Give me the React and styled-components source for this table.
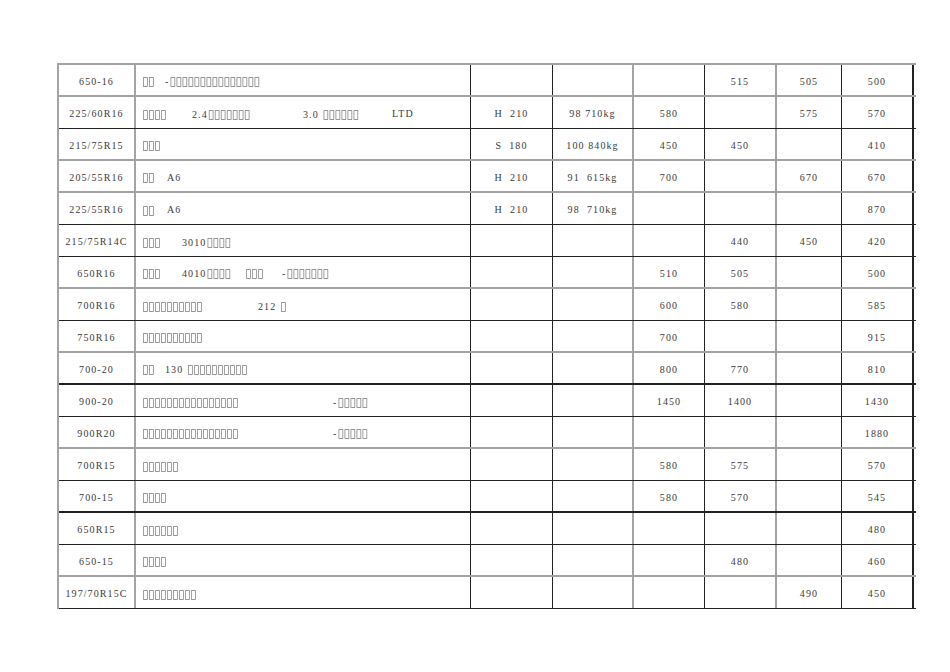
import styled, { createGlobalStyle } from 'styled-components';

const GlobalStyle = createGlobalStyle`
  html, body {
    margin: 0;
    background: #fff;
  }
  body {
    font-family: "Liberation Serif", "DejaVu Sans", serif;
  }
`;

const LINES = {
  grey: '2px solid #a3a3a3',
  black: '1px solid #222',
  heavy: '2px solid #222',
};

const COLUMNS = [
  { width: 77, line: 'grey' },
  { width: 335, line: 'black' },
  { width: 82, line: 'black' },
  { width: 81, line: 'grey' },
  { width: 71, line: 'black' },
  { width: 72, line: 'grey' },
  { width: 65, line: 'black' },
  { width: 72, line: 'heavy' },
];

// desc: [text, width up to next segment]
const ROWS = [
  { size: '650-16', line: 'grey', desc: [['▯▯', 23], ['-▯▯▯▯▯▯▯▯▯▯▯▯▯▯▯']], vals: ['', '', '', '515', '505', '500'] },
  { size: '225/60R16', line: 'black', desc: [['▯▯▯▯', 50], ['2.4▯▯▯▯▯▯▯', 111], ['3.0 ▯▯▯▯▯▯', 89], ['LTD']], vals: ['H  210', '98 710kg', '580', '', '575', '570'] },
  { size: '215/75R15', line: 'grey', desc: [['▯▯▯']], vals: ['S  180', '100 840kg', '450', '450', '', '410'] },
  { size: '205/55R16', line: 'grey', desc: [['▯▯', 25], ['A6']], vals: ['H  210', '91  615kg', '700', '', '670', '670'] },
  { size: '225/55R16', line: 'black', desc: [['▯▯', 25], ['A6']], vals: ['H  210', '98  710kg', '', '', '', '870'] },
  { size: '215/75R14C', line: 'black', desc: [['▯▯▯', 40], ['3010▯▯▯▯']], vals: ['', '', '', '440', '450', '420'] },
  { size: '650R16', line: 'grey', desc: [['▯▯▯', 40], ['4010▯▯▯▯', 63], ['▯▯▯', 37], ['-▯▯▯▯▯▯▯']], vals: ['', '', '510', '505', '', '500'] },
  { size: '700R16', line: 'black', desc: [['▯▯▯▯▯▯▯▯▯▯', 116], ['212 ▯']], vals: ['', '', '600', '580', '', '585'] },
  { size: '750R16', line: 'grey', desc: [['▯▯▯▯▯▯▯▯▯▯']], vals: ['', '', '700', '', '', '915'] },
  { size: '700-20', line: 'heavy', desc: [['▯▯', 23], ['130 ▯▯▯▯▯▯▯▯▯▯']], vals: ['', '', '800', '770', '', '810'] },
  { size: '900-20', line: 'black', desc: [['▯▯▯▯▯▯▯▯▯▯▯▯▯▯▯▯', 191], ['-▯▯▯▯▯']], vals: ['', '', '1450', '1400', '', '1430'] },
  { size: '900R20', line: 'grey', desc: [['▯▯▯▯▯▯▯▯▯▯▯▯▯▯▯▯', 191], ['-▯▯▯▯▯']], vals: ['', '', '', '', '', '1880'] },
  { size: '700R15', line: 'black', desc: [['▯▯▯▯▯▯']], vals: ['', '', '580', '575', '', '570'] },
  { size: '700-15', line: 'heavy', desc: [['▯▯▯▯']], vals: ['', '', '580', '570', '', '545'] },
  { size: '650R15', line: 'black', desc: [['▯▯▯▯▯▯']], vals: ['', '', '', '', '', '480'] },
  { size: '650-15', line: 'grey', desc: [['▯▯▯▯']], vals: ['', '', '', '480', '', '460'] },
  { size: '197/70R15C', line: 'black', desc: [['▯▯▯▯▯▯▯▯▯']], vals: ['', '', '', '', '490', '450'] },
];

const Page = styled.div`
  padding: 63px 0 0 57px;
`;

const Sheet = styled.div`
  width: 857px;
  border-left: ${LINES.grey};
  border-top: ${LINES.grey};
`;

const Row = styled.div`
  display: grid;
  grid-template-columns: ${COLUMNS.map((c) => `${c.width}px`).join(' ')};
  height: 32px;
  box-sizing: border-box;
  border-bottom: ${(p) => LINES[p.$line]};
`;

const Cell = styled.div`
  display: flex;
  align-items: center;
  justify-content: ${(p) => (p.$left ? 'flex-start' : 'center')};
  padding: 2px 0 0 ${(p) => (p.$left ? '6px' : '0')};
  box-sizing: border-box;
  border-right: ${(p) => LINES[p.$line]};
  font-size: 10px;
  letter-spacing: 1.1px;
  color: #3a3a3a;
  white-space: pre;
  overflow: hidden;
`;

const Seg = styled.span`
  flex: none;
  width: ${(p) => (p.$w ? `${p.$w}px` : 'auto')};
`;

const Tofu = styled.span`
  font-family: "DejaVu Sans", sans-serif;
  font-size: 12px;
  letter-spacing: -0.6px;
  color: #777;
  filter: grayscale(1);
`;

const withTofu = (text) =>
  text.split(/(▯+)/).filter(Boolean).map((part, i) =>
    part[0] === '▯' ? <Tofu key={i}>{part}</Tofu> : <span key={i}>{part}</span>
  );

const App = () => {
  return (
    <Page>
      <GlobalStyle />
      <Sheet>
        {ROWS.map((row) => (
          <Row key={row.size} $line={row.line}>
            <Cell $line={COLUMNS[0].line}>{row.size}</Cell>
            <Cell $line={COLUMNS[1].line} $left>
              {row.desc.map(([text, w], i) => (
                <Seg key={i} $w={w}>{withTofu(text)}</Seg>
              ))}
            </Cell>
            {row.vals.map((v, i) => (
              <Cell key={i} $line={COLUMNS[i + 2].line}>{v}</Cell>
            ))}
          </Row>
        ))}
      </Sheet>
    </Page>
  );
};

export default App;
